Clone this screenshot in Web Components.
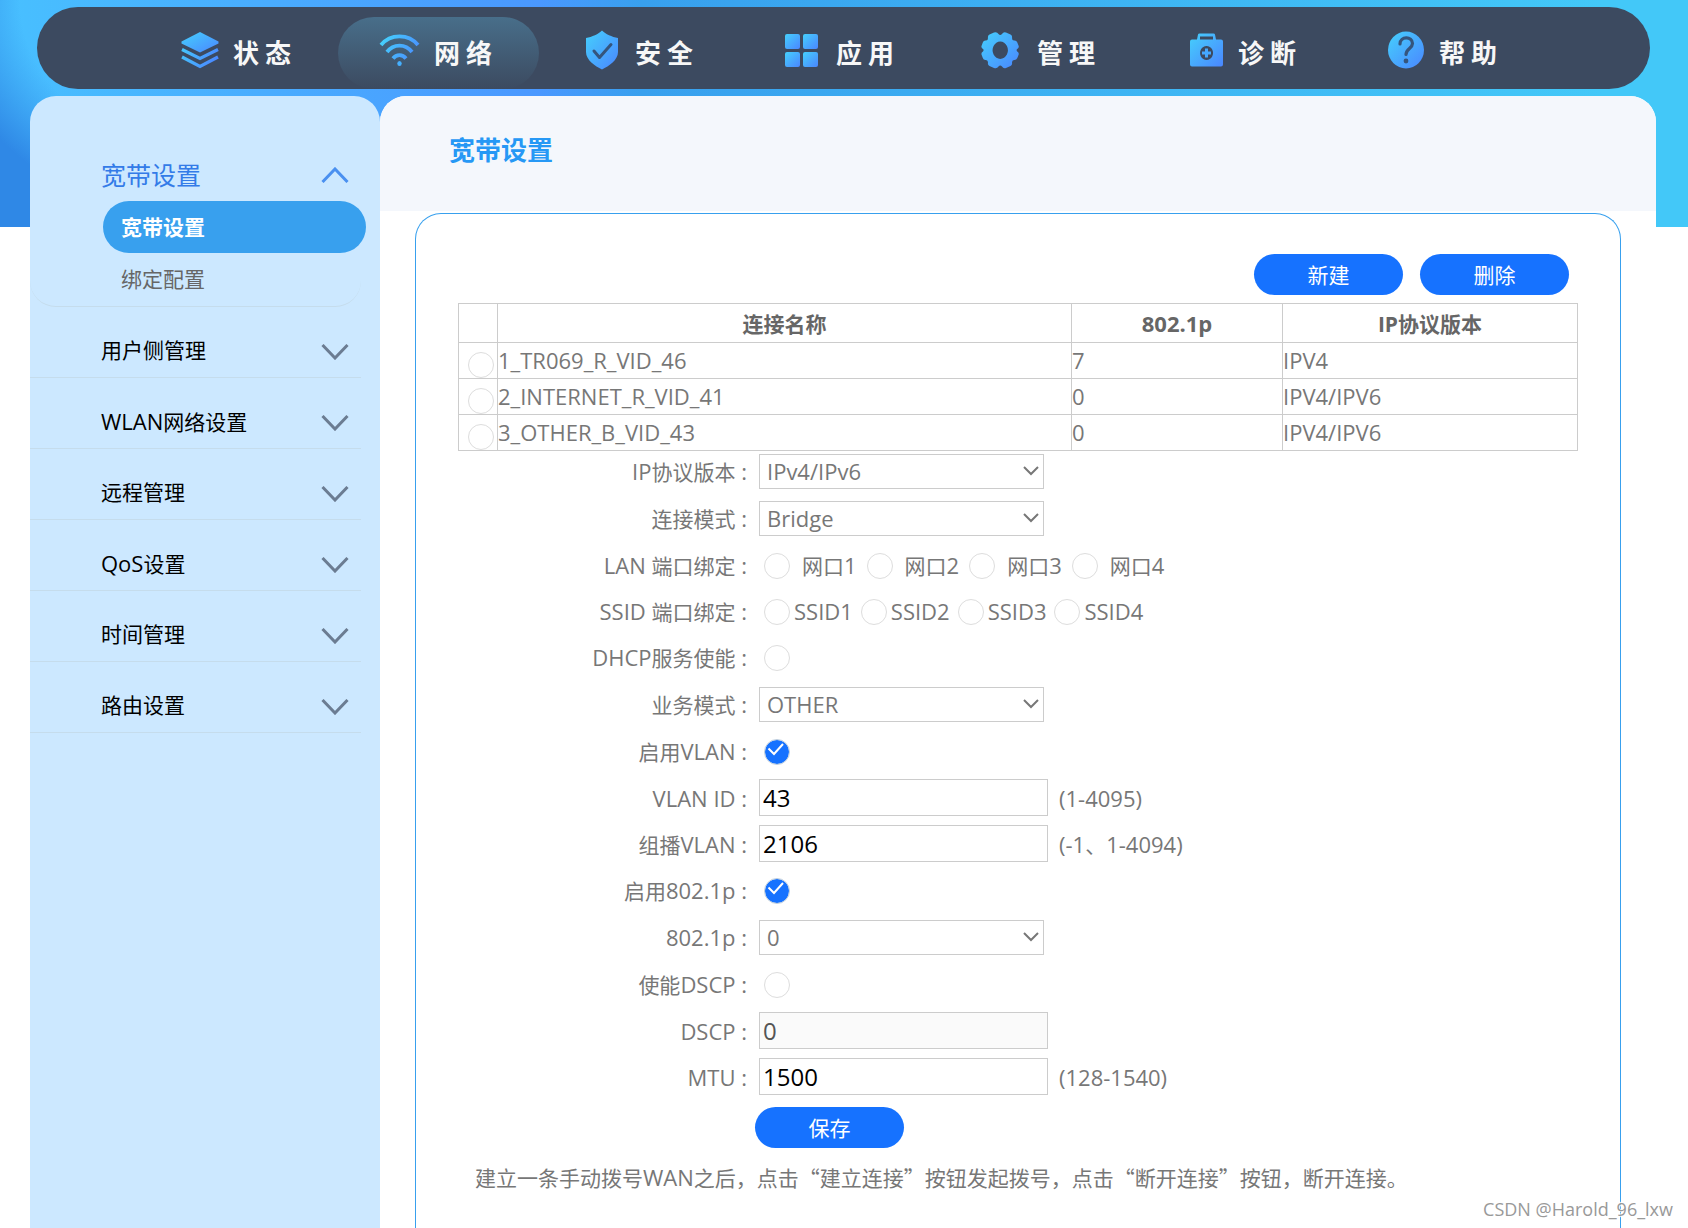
<!DOCTYPE html>
<html lang="zh-CN">
<head>
<meta charset="utf-8">
<title>宽带设置</title>
<style>
  html, body { margin: 0; min-height: 100%; }
  body {
    font-family: "Open Sans", "Noto Sans CJK SC", sans-serif;
    font-size: 21px;
    line-height: 30px;
    color: #777;
    background: #fff;
  }
</style>
</head>
<body>
<router-page>
  <top-nav slot="nav">
    <nav-item icon="layers">状态</nav-item>
    <nav-item icon="wifi" active>网络</nav-item>
    <nav-item icon="shield">安全</nav-item>
    <nav-item icon="grid">应用</nav-item>
    <nav-item icon="gear">管理</nav-item>
    <nav-item icon="case">诊断</nav-item>
    <nav-item icon="help">帮助</nav-item>
  </top-nav>
  <side-menu slot="side">
    <side-group label="宽带设置" open>
      <side-link active>宽带设置</side-link>
      <side-link>绑定配置</side-link>
    </side-group>
    <side-group label="用户侧管理"></side-group>
    <side-group label="WLAN网络设置"></side-group>
    <side-group label="远程管理"></side-group>
    <side-group label="QoS设置"></side-group>
    <side-group label="时间管理"></side-group>
    <side-group label="路由设置"></side-group>
  </side-menu>
  <content-panel heading="宽带设置">
    <pill-button slot="actions">新建</pill-button>
    <pill-button slot="actions">删除</pill-button>
    <connection-table></connection-table>
    <wan-form></wan-form>
  </content-panel>
  <water-mark slot="mark">CSDN @Harold_96_lxw</water-mark>
</router-page>

<script>
const define = (name, html, setup) => {
  const template = document.createElement('template');
  template.innerHTML = '<style>*{box-sizing:border-box}.latin{font-size:22px}</style>' + html;
  customElements.define(name, class extends HTMLElement {
    constructor() {
      super();
      this.attachShadow({ mode: 'open' }).append(template.content.cloneNode(true));
    }
    connectedCallback() { if (setup) setup(this, this.shadowRoot); }
  });
};

// Latin runs are set one size larger than the Chinese text around them.
const mixed = text => text.replace(/[ -~]+/g, run => `<span class="latin">${run}</span>`);

define('router-page', `
<style>
  :host {
    display: flex; flex-direction: column; min-height: 100vh; max-height: 100vh;
    overflow: hidden; position: relative; padding-top: 7px;
    background:
      radial-gradient(ellipse 250px 215px at 190px 0, rgba(47,136,230,0) 68%, #2f88e6 100%) 0 0 / 190px 227px no-repeat,
      linear-gradient(90deg, rgba(56,160,238,0) 32%, #38a0ee 38%, #43c8f8 95%) 0 0 / 100% 227px no-repeat,
      linear-gradient(90deg, #48c0ff 0, #4a98ff 32%) 0 0 / 100% 227px no-repeat,
      #fff;
  }
  .body { display: flex; flex: 1; min-height: 0; margin: 7px 32px 0 30px; }
</style>
<slot name="nav"></slot>
<div class="body"><slot name="side"></slot><slot></slot></div>
<slot name="mark"></slot>`);

define('top-nav', `
<style>
  :host { display: block; margin: 0 38px 0 37px; }
  nav {
    display: flex; align-items: flex-end; height: 82px; padding-left: 100px;
    border-radius: 41px; background: #3c4a60;
  }
</style>
<nav><slot></slot></nav>`);

const gradient = '<defs><linearGradient id="g" x1="0" y1="0" x2="1" y2="1"><stop offset="0" stop-color="#45d0fc"/><stop offset="1" stop-color="#4a86ff"/></linearGradient><linearGradient id="u" gradientUnits="userSpaceOnUse" x1="2" y1="8" x2="38" y2="30"><stop offset="0" stop-color="#45d0fc"/><stop offset="1" stop-color="#4a86ff"/></linearGradient></defs>';
const icons = {
  layers: '<path fill="url(#g)" d="M20 2 38.500 11.500v2L20 22.500 1.500 13.500v-2z"/><path fill="none" stroke="url(#u)" stroke-width="3.200" d="M2 19.500 20 28.500l18-9M2 27l18 9.500L38 27"/>',
  wifi: '<g fill="none" stroke="url(#u)" stroke-width="3.800"><path d="M0 15C9.500 3.500 27.500 3.500 37 15"/><path d="M6 22c6.500-8.500 18.500-8.500 25 0"/><path d="M12 28.500c3.500-4.500 9.500-4.500 13 0"/></g><ellipse cx="18.500" cy="33.500" rx="2.200" ry="2.600" fill="#45b0ff"/>',
  shield: '<path fill="url(#g)" d="M20 .5C23.500 4 30 7 36 8v14c0 8-9 14-16 17.500C13 36 4 30 4 22V8C10 7 16.500 4 20 .5z"/><path fill="none" stroke="#35557d" stroke-width="3" stroke-linecap="round" stroke-linejoin="round" d="m12 21 5.500 6.500L29 14.500"/>',
  grid: '<g fill="url(#g)"><rect x="2" y="4" width="15" height="15" rx="2"/><rect x="20" y="4" width="15" height="15" rx="2"/><rect x="2" y="22" width="15" height="15" rx="2"/><rect x="20" y="22" width="15" height="15" rx="2"/></g>',
  gear: '<path fill="url(#g)" fill-rule="evenodd" d="M10 2.500Q13 1.500 14.500 4q1.700 2 3.500 0Q19.500 1.500 22 2.500l4.500 2q2 1 1.500 3.500 0 2.500 2 2.500 2.500-.3 3.300 2L34.700 16q.4 2-1.500 3-1.200 1 0 2.400 1.900 1 1.500 3l-1.400 3.600q-1 2.300-3.300 2-2 0-2 2.500.5 2.500-1.500 3.500l-4.500 2q-2.500 1-4-1.500-1.800-2-3.500 0-1.500 2.500-4.500 1.500L5.500 36Q3.500 35 4 32.500 4 30 2 30q-2.500.3-3.200-2l-1.300-3.600q-.4-2 1.500-3 1.200-1.400 0-2.400-1.900-1-1.500-3l1.300-3.500q.7-2.300 3.200-2 2 0 2-2.500Q3.500 5.500 5.500 4.500zM16.200 11.500a7.700 8.700 0 1 0 .1 0z"/>',
  case: '<path fill="url(#g)" fill-rule="evenodd" d="M7 9.500h5l1-5q.3-1 1.500-1h14q1.200 0 1.500 1l1 5h5q2 0 2 2v23q0 2-2 2H7q-2 0-2-2v-23q0-2 2-2zM15 6.500v3h13v-3zM21.500 16a6.500 7 0 1 0 .1 0z"/><path stroke="#45a8ff" stroke-width="3" d="M21.500 18.500v9M17 23h9"/>',
  help: '<ellipse cx="20" cy="20" rx="18" ry="18.500" fill="url(#g)"/><path fill="none" stroke="#35557d" stroke-width="3.200" stroke-linecap="round" d="M14 14c0-8 12.500-8 12.500-.5 0 5-6.500 5-6.500 11"/><circle cx="20" cy="31" r="2.400" fill="#35557d"/>'
};

define('nav-item', `
<style>
  :host { display: block; }
  a {
    display: flex; align-items: center; gap: 13px; width: 201px; height: 72px; padding-left: 43px;
    color: #f7f7f7; text-decoration: none; font-size: 26px; line-height: 36px; font-weight: 700; letter-spacing: 6px;
    border-radius: 36px;
  }
  :host([active]) a { background: linear-gradient(#486e8a, #3c4a60); }
  svg { width: 40px; height: 40px; margin-bottom: 6px; overflow: visible; flex: none; }
</style>
<a href="#"><svg viewBox="0 0 40 40" aria-hidden="true"></svg><span><slot></slot></span></a>`,
  (host, root) => { root.querySelector('svg').innerHTML = gradient + icons[host.getAttribute('icon')]; });

define('side-menu', `
<style>
  :host { display: block; flex: none; width: 350px; padding-top: 48px; background: #cce8ff; border-radius: 26px 26px 0 0; }
</style>
<nav><slot></slot></nav>`);

define('side-group', `
<style>
  :host { display: block; margin-right: 19px; border-bottom: 1px solid #c5dcec; }
  :host([open]) { border-radius: 0 0 26px 26px; padding-bottom: 1px; }
  button {
    display: flex; align-items: center; justify-content: space-between; width: 100%; height: 70px;
    margin: 0; padding: 16px 12px 0 71px; border: 0; background: none;
    font: inherit; color: #000; text-align: left;
  }
  :host([open]) button { height: 57px; padding-top: 4px; font-size: 25px; color: #337be8; }
  svg { width: 28px; height: 16px; margin-top: 4px; fill: none; stroke: #6b7c92; stroke-width: 3; }
  :host([open]) svg { margin-top: 0; stroke: #4a90f0; }
  .links { display: flex; flex-direction: column; }
  :host(:not([open])) .links { display: none; }
</style>
<button type="button"><span class="text"></span><svg viewBox="0 0 28 16" aria-hidden="true"><path/></svg></button>
<div class="links"><slot></slot></div>`,
  (host, root) => {
    const open = host.hasAttribute('open');
    root.querySelector('.text').innerHTML = mixed(host.getAttribute('label'));
    root.querySelector('button').setAttribute('aria-expanded', open);
    root.querySelector('path').setAttribute('d', open ? 'M1.500 15 14 2l12.500 13' : 'M1.500 1 14 14 26.500 1');
  });

define('side-link', `
<style>
  :host { display: block; margin: 0 -5px 0 73px; }
  a { display: flex; align-items: center; height: 52px; padding-left: 18px; border-radius: 26px; color: #666; text-decoration: none; }
  :host([active]) a { background: #38a0ee; color: #fff; font-weight: 700; }
</style>
<a href="#"><slot></slot></a>`);

define('content-panel', `
<style>
  :host { display: flex; flex-direction: column; flex: 1; min-width: 0; background: #fff; border-radius: 26px 26px 0 0; overflow: hidden; }
  header { height: 115px; padding: 36px 69px 0; background: #f4f7fc; }
  h1 { margin: 0; font-size: 26px; line-height: 36px; font-weight: 700; color: #2698f5; }
  section { flex: 1; margin: 2px 35px 0; padding: 40px 42px 0; border: 1px solid #38a0ee; border-bottom: 0; border-radius: 26px 26px 0 0; }
  .actions { display: flex; justify-content: flex-end; gap: 17px; padding: 0 9px 8px 0; }
</style>
<header><h1></h1></header>
<section><div class="actions"><slot name="actions"></slot></div><slot></slot></section>`,
  (host, root) => { root.querySelector('h1').textContent = host.getAttribute('heading'); });

define('pill-button', `
<style>
  :host { display: block; }
  button { display: block; width: 149px; height: 41px; padding: 0; border: 0; border-radius: 21px; background: #1672ff; color: #fff; font: inherit; }
</style>
<button type="button"><slot></slot></button>`);

define('connection-table', `
<style>
  :host { display: block; }
  table { width: 100%; border-collapse: collapse; table-layout: fixed; }
  th, td { border: 1px solid #ccc; padding: 0; text-align: left; }
  th { height: 39px; padding-top: 1px; text-align: center; color: #666; }
  td { height: 36px; padding-bottom: 2px; line-height: 32px; font-size: 22px; }
  td:first-child { padding: 0 3px 0 0; vertical-align: bottom; }
  input { appearance: none; display: block; width: 26px; height: 26px; margin: 0 0 0 auto; border: 1px solid #ddd; border-radius: 50%; background: #fff; }
  .pick { width: 39px; } .prio { width: 211px; } .ver { width: 295px; }
</style>
<table>
  <colgroup><col class="pick"><col><col class="prio"><col class="ver"></colgroup>
  <thead><tr><th></th><th>连接名称</th><th><span class="latin">802.1p</span></th><th>IP协议版本</th></tr></thead>
  <tbody></tbody>
</table>`,
  (host, root) => {
    root.querySelector('tbody').innerHTML = [
      ['1_TR069_R_VID_46', '7', 'IPV4'],
      ['2_INTERNET_R_VID_41', '0', 'IPV4/IPV6'],
      ['3_OTHER_B_VID_43', '0', 'IPV4/IPV6']
    ].map(([name, prio, ver], i) => `<tr><td><input type="radio" name="wan" id="w${i}" aria-labelledby="n${i}"></td><td><label for="w${i}" id="n${i}">${name}</label></td><td>${prio}</td><td>${ver}</td></tr>`).join('');
  });

const fields = [
  { id: 'ipver', label: 'IP协议版本', type: 'select', value: 'IPv4/IPv6' },
  { id: 'mode', label: '连接模式', type: 'select', value: 'Bridge' },
  { id: 'lan', label: 'LAN 端口绑定', type: 'group', cls: 'lan', items: ['网口1', '网口2', '网口3', '网口4'] },
  { id: 'ssid', label: 'SSID 端口绑定', type: 'group', cls: 'ssid', items: ['SSID1', 'SSID2', 'SSID3', 'SSID4'] },
  { id: 'dhcp', label: 'DHCP服务使能', type: 'check' },
  { id: 'service', label: '业务模式', type: 'select', value: 'OTHER' },
  { id: 'vlanon', label: '启用VLAN', type: 'check', checked: true },
  { id: 'vlan', label: 'VLAN ID', type: 'text', value: '43', hint: '(1-4095)' },
  { id: 'mvlan', label: '组播VLAN', type: 'text', value: '2106', hint: '(-1、1-4094)' },
  { id: 'pon', label: '启用802.1p', type: 'check', checked: true },
  { id: 'prio', label: '802.1p', type: 'select', value: '0' },
  { id: 'dscpon', label: '使能DSCP', type: 'check' },
  { id: 'dscp', label: 'DSCP', type: 'text', value: '0', disabled: true },
  { id: 'mtu', label: 'MTU', type: 'text', value: '1500', hint: '(128-1540)' }
];
const checkbox = (id, checked) => `<span class="box"><input type="checkbox" id="${id}"${checked ? ' checked' : ''}>${checked ? '<svg viewBox="0 0 26 26" aria-hidden="true"><path d="m4.500 9.500 5.500 5.500 9-10"/></svg>' : ''}</span>`;
const control = f => {
  if (f.type === 'select') return `<span class="drop"><select id="${f.id}"><option>${f.value}</option></select><svg viewBox="0 0 16 10" aria-hidden="true"><path d="m1 1 7 7 7-7"/></svg></span>`;
  if (f.type === 'check') return checkbox(f.id, f.checked);
  if (f.type === 'group') return f.items.map((t, i) => `<span class="choice">${checkbox(f.id + i)}<label for="${f.id + i}">${mixed(t)}</label></span>`).join('');
  return `<input type="text" id="${f.id}" value="${f.value}"${f.disabled ? ' disabled' : ''}>${f.hint ? `<span class="hint">${mixed(f.hint)}</span>` : ''}`;
};

define('wan-form', `
<style>
  :host { display: block; }
  form { display: flex; flex-direction: column; gap: 9px; margin-top: 1px; }
  .row { display: grid; grid-template-columns: 289px 1fr; column-gap: 12px; align-items: center; height: 37px; }
  .row.select, .row.check { height: 38px; }
  .name, .choice label, .hint { padding-top: 1px; }
  .name { text-align: right; white-space: pre; }
  .value { display: flex; align-items: center; }
  .drop, .box { display: grid; align-items: center; }
  .drop > *, .box > * { grid-area: 1 / 1; }
  select, input[type=text] { margin: 0; border: 1px solid #ccc; border-radius: 0; background: #fff; font: inherit; }
  select { appearance: none; width: 285px; height: 35px; padding: 0 7px; font-size: 22px; color: #777; }
  .drop svg { justify-self: end; width: 16px; height: 10px; margin-right: 5px; fill: none; stroke: #777; stroke-width: 2; pointer-events: none; }
  input[type=text] { width: 289px; height: 37px; padding: 0 3px 1px; font-size: 24px; color: #000; }
  input[type=text]:disabled { background: #fafafa; color: #545454; }
  .box { margin-left: 5px; padding-top: 2px; }
  input[type=checkbox] { appearance: none; width: 26px; height: 26px; margin: 0; border: 1px solid #ddd; border-radius: 50%; background: #fff; }
  input[type=checkbox]:checked { background: #1672ff; border-color: #bcd; background-clip: padding-box; }
  .box svg { width: 26px; height: 26px; fill: none; stroke: #fff; stroke-width: 2; pointer-events: none; }
  .choice { display: flex; align-items: center; }
  .choice .box { margin-right: 4px; }
  .choice + .choice .box { margin-left: 8px; }
  .lan .choice .box { margin-right: 12px; }
  .lan .choice + .choice .box { margin-left: 10px; }
  .hint { margin-left: 11px; }
  pill-button { margin: 3px 0 0 297px; }
  p { margin: 14px 17px 0; font-family: "Noto Sans CJK SC", sans-serif; }
  p .latin { font-family: "Open Sans", sans-serif; }
</style>
<form></form>
<p>建立一条手动拨号<span class="latin">WAN</span>之后，点击“建立连接”按钮发起拨号，点击“断开连接”按钮，断开连接。</p>`,
  (host, root) => {
    root.querySelector('form').innerHTML = fields.map(f => {
      const group = f.type === 'group';
      const text = mixed(f.label + ' :');
      const name = group ? `<span class="name" id="${f.id}">${text}</span>` : `<label class="name" for="${f.id}">${text}</label>`;
      return `<div class="row ${f.type} ${f.cls || ''}"${group ? ` role="group" aria-labelledby="${f.id}"` : ''}>${name}<div class="value">${control(f)}</div></div>`;
    }).join('') + '<pill-button>保存</pill-button>';
  });

define('water-mark', `
<style>
  :host { position: absolute; right: 15px; bottom: 13px; font-size: 18px; line-height: 26px; color: #999; text-shadow: 1px 1px 1px #fff, -1px -1px 1px #fff; }
</style>
<slot></slot>`);
</script>
</body>
</html>
